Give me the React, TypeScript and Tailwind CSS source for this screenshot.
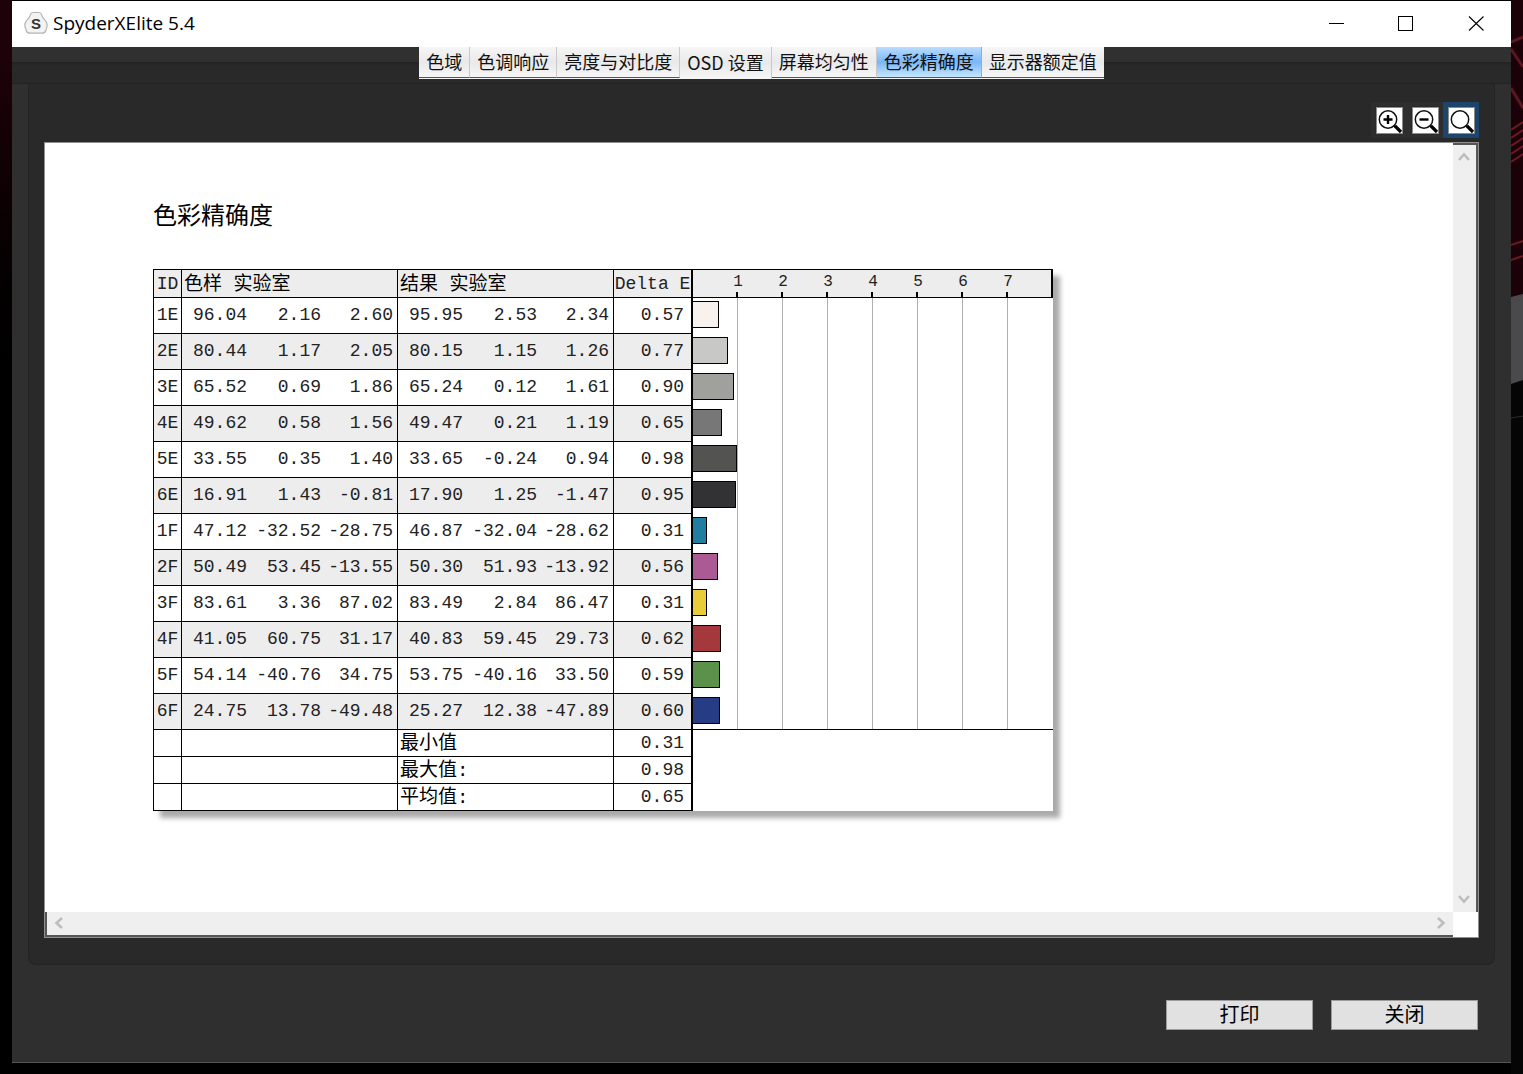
import { clsx } from "clsx"

const tabs = ["色域", "色调响应", "亮度与对比度", "OSD 设置", "屏幕均匀性", "色彩精确度", "显示器额定值"]
const activeTab = "色彩精确度"
const hoveredTab = "OSD 设置"

const patches = [
    { id: "1E", sample: ["96.04", "2.16", "2.60"], result: ["95.95", "2.53", "2.34"], delta: "0.57", color: "#f8f2ee" },
    { id: "2E", sample: ["80.44", "1.17", "2.05"], result: ["80.15", "1.15", "1.26"], delta: "0.77", color: "#c8c8c7" },
    { id: "3E", sample: ["65.52", "0.69", "1.86"], result: ["65.24", "0.12", "1.61"], delta: "0.90", color: "#a0a19d" },
    { id: "4E", sample: ["49.62", "0.58", "1.56"], result: ["49.47", "0.21", "1.19"], delta: "0.65", color: "#787777" },
    { id: "5E", sample: ["33.55", "0.35", "1.40"], result: ["33.65", "-0.24", "0.94"], delta: "0.98", color: "#535352" },
    { id: "6E", sample: ["16.91", "1.43", "-0.81"], result: ["17.90", "1.25", "-1.47"], delta: "0.95", color: "#323234" },
    { id: "1F", sample: ["47.12", "-32.52", "-28.75"], result: ["46.87", "-32.04", "-28.62"], delta: "0.31", color: "#207fa1" },
    { id: "2F", sample: ["50.49", "53.45", "-13.55"], result: ["50.30", "51.93", "-13.92"], delta: "0.56", color: "#ac5a94" },
    { id: "3F", sample: ["83.61", "3.36", "87.02"], result: ["83.49", "2.84", "86.47"], delta: "0.31", color: "#e8cd38" },
    { id: "4F", sample: ["41.05", "60.75", "31.17"], result: ["40.83", "59.45", "29.73"], delta: "0.62", color: "#a4383d" },
    { id: "5F", sample: ["54.14", "-40.76", "34.75"], result: ["53.75", "-40.16", "33.50"], delta: "0.59", color: "#5b914b" },
    { id: "6F", sample: ["24.75", "13.78", "-49.48"], result: ["25.27", "12.38", "-47.89"], delta: "0.60", color: "#263c85" },
]

const summary = [
    { label: "最小值", value: "0.31" },
    { label: "最大值:", value: "0.98" },
    { label: "平均值:", value: "0.65" },
]

const ticks = [1, 2, 3, 4, 5, 6, 7]

function Logo() {
    return (
        <svg viewBox="0 0 24 24" className="size-6" aria-hidden="true">
            <path
                d="M9 1.5h6c1.6 0 2.3.9 2.7 2.3.5 2 1.3 3.2 2.9 4.8 2.3 2.3 3 4 2.5 6.4-.3 1.3-.8 2.6-1.3 4.5-.5 1.9-1.8 2.7-3.8 2.7H6c-2 0-3.3-.8-3.8-2.7-.5-1.9-1-3.2-1.3-4.5C.4 12.6 1.1 10.9 3.4 8.6 5 7 5.8 5.8 6.3 3.8 6.7 2.4 7.4 1.5 9 1.5z"
                fill="#f3f3f3"
                stroke="#b4b4b4"
                strokeWidth="1.2"
            />
            <text x="12" y="17.5" textAnchor="middle" className="fill-[#333] font-['Liberation_Sans',sans-serif] text-[15px] font-bold">
                S
            </text>
        </svg>
    )
}

function TitleBar() {
    return (
        <header className="flex h-[46px] items-center bg-white pb-0.5 pl-3 text-black">
            <Logo />
            <h1 className="ml-[5px] flex-1 font-['Open_Sans','Noto_Sans',sans-serif] text-[19px] leading-6">SpyderXElite 5.4</h1>
            <button type="button" aria-label="最小化" className="flex h-full w-[70px] items-center justify-center">
                <svg viewBox="0 0 16 16" className="size-4" stroke="currentColor" shapeRendering="crispEdges">
                    <path d="M1 8.5h15" />
                </svg>
            </button>
            <button type="button" aria-label="最大化" className="flex h-full w-[70px] items-center justify-center">
                <svg viewBox="0 0 16 16" className="size-4" fill="none" stroke="currentColor" shapeRendering="crispEdges">
                    <path d="M.5 1.5h14v14H.5z" />
                </svg>
            </button>
            <button type="button" aria-label="关闭窗口" className="flex h-full w-[70px] items-center justify-center">
                <svg viewBox="0 0 16 16" className="size-4" fill="none" stroke="currentColor" strokeWidth="1.1">
                    <path d="M1 1.5l14.5 14M15.5 1.5L1 15.5" />
                </svg>
            </button>
        </header>
    )
}

function TabBar() {
    return (
        <nav className="flex h-[37px] items-start justify-center border-b border-[#232323] bg-[linear-gradient(#303030_15px,#232323_15px,#292929_19px)]">
            <div role="tablist" className="flex h-8 rounded-t-sm bg-[#f3f3f3]">
                {tabs.map((tab) => (
                    <button
                        key={tab}
                        type="button"
                        role="tab"
                        aria-selected={tab === activeTab}
                        className={clsx(
                            "flex items-center whitespace-nowrap border-r px-[7px] text-lg leading-6 text-[#111] last:border-r-0",
                            tab === hoveredTab ? "h-8 border-[#bbb] px-[6px] pb-0.5" : "h-[31px] border-b border-b-[#555] pb-[3px]",
                            tab === activeTab
                                ? "border-r-[#7fb0e8] bg-linear-to-b from-[#b9dcff] via-[#79b6f8] to-[#c5e6ff]"
                                : "border-r-[#c9c9c9] bg-linear-to-b from-[#f6f6f6] via-[#e9e9e9] to-[#f6f6f6]"
                        )}
                    >
                        {tab}
                    </button>
                ))}
            </div>
        </nav>
    )
}

function ZoomButton({ label, sign, focused }: { label: string; sign?: string; focused?: boolean }) {
    return (
        <button
            type="button"
            aria-label={label}
            className={clsx("flex size-9 items-end justify-end border-4", focused ? "border-[#1d456b] bg-[#1d456b]" : "border-[#2e2e2e]")}
        >
            <svg viewBox="0 0 27 27" className="size-[27px]" fill="none">
                <rect x=".5" y=".5" width="26" height="26" fill="#fff" stroke="#8b8b8b" />
                <circle cx="12" cy="12.5" r="8.7" stroke="#111" strokeWidth="1.5" />
                <path d="M18 18.5l2 1.5" stroke="#111" strokeWidth="2" />
                <path d="M19 19l6 6" stroke="#000" strokeWidth="3.2" />
                {sign && <path d={sign} stroke="#000" strokeWidth="2.4" />}
            </svg>
        </button>
    )
}

function ScrollArrow({ label, d }: { label: string; d: string }) {
    return (
        <button type="button" aria-label={label} className="flex size-[22px] items-center justify-center">
            <svg viewBox="0 0 12 12" className="size-3" fill="none" stroke="#bdbdbd" strokeWidth="2.6">
                <path d={d} />
            </svg>
        </button>
    )
}

function LabCells({ values }: { values: string[] }) {
    return (
        <>
            {values.map((value, index) => (
                <td key={index} className="border-b border-black pb-0.5 pr-1 text-right nth-[3n+1]:border-r">
                    {value}
                </td>
            ))}
        </>
    )
}

function ResultTable() {
    return (
        <table className="w-[540px] table-fixed border-separate border-spacing-0 border-l border-t border-black">
            <colgroup>
                <col className="w-[28px]" />
                <col className="w-[69px]" />
                <col className="w-[74px]" />
                <col className="w-[73px]" />
                <col className="w-[69px]" />
                <col className="w-[74px]" />
                <col className="w-[73px]" />
                <col className="w-[79px]" />
            </colgroup>
            <thead>
                <tr className="h-7 whitespace-nowrap bg-[#ededed]">
                    <th className="border-b border-r border-black font-normal">ID</th>
                    <th colSpan={3} className="border-b border-r border-black pl-0.5 pt-0.5 text-left text-[19px] font-normal text-black">色样 实验室</th>
                    <th colSpan={3} className="border-b border-r border-black pl-0.5 pt-0.5 text-left text-[19px] font-normal text-black">结果 实验室</th>
                    <th className="border-b border-r-2 border-black font-normal">Delta E</th>
                </tr>
            </thead>
            <tbody>
                {patches.map((patch) => (
                    <tr key={patch.id} className="h-9 even:bg-[#ededed]">
                        <th className="border-b border-r border-black pb-0.5 font-normal">{patch.id}</th>
                        <LabCells values={patch.sample} />
                        <LabCells values={patch.result} />
                        <td className="border-b border-r-2 border-black pb-0.5 pr-[7px] text-right">{patch.delta}</td>
                    </tr>
                ))}
            </tbody>
            <tfoot>
                {summary.map((row) => (
                    <tr key={row.label} className="h-[27px]">
                        <td className="border-b border-r border-black" />
                        <td colSpan={3} className="border-b border-r border-black" />
                        <th colSpan={3} className="border-b border-r border-black pl-0.5 pt-0.5 text-left text-[19px] font-normal text-black">{row.label}</th>
                        <td className="border-b border-r-2 border-black pr-[7px] text-right">{row.value}</td>
                    </tr>
                ))}
            </tfoot>
        </table>
    )
}

function DeltaChart() {
    return (
        <div className="w-[360px]">
            {/* Scale */}
            <div className="grid h-[29px] grid-cols-8 border-b border-t border-black bg-[#ededed]">
                {ticks.map((tick) => (
                    <div key={tick} className="flex flex-col items-end justify-between pt-0.5">
                        <span className="flex w-0 justify-center text-base leading-5">{tick}</span>
                        <span className="h-[5px] w-0.5 bg-black" />
                    </div>
                ))}
                <div className="border-r-2 border-black" />
            </div>

            <div className="grid border-b border-black">
                <div className="col-start-1 row-start-1 grid grid-cols-8">
                    {ticks.map((tick) => (
                        <div key={tick} className="border-r border-[#b0b0b0]" />
                    ))}
                </div>
                <div className="z-10 col-start-1 row-start-1">
                    {patches.map((patch) => (
                        <div key={patch.id} className="h-9 pt-[3px] last:h-[35px]">
                            <div
                                className="h-[27px] border-y border-r border-black"
                                style={{ width: `${(Number(patch.delta) / 8) * 100}%`, backgroundColor: patch.color }}
                            />
                        </div>
                    ))}
                </div>
            </div>
        </div>
    )
}

function Viewer() {
    return (
        <div className="grid flex-1 grid-cols-[minmax(0,1fr)_25px] grid-rows-[minmax(0,1fr)_25px] border border-[#8f8f8f] bg-white">
            <main className="pl-[108px] pt-[53px] text-black">
                <h2 className="text-2xl leading-9">色彩精确度</h2>
                <div className="mt-[37px] flex w-fit bg-white font-['Liberation_Mono','Noto_Sans_CJK_SC',monospace] text-lg leading-5 text-[#222] shadow-[7px_7px_5px_#aaa]">
                    <ResultTable />
                    <DeltaChart />
                </div>
            </main>
            <div className="flex flex-col items-start justify-between border-r-2 border-t-2 border-[#555] bg-[#efefef] pb-0.5 pt-px">
                <ScrollArrow label="向上滚动" d="M1 9l5-5.5L11 9" />
                <ScrollArrow label="向下滚动" d="M1 3l5 5.5L11 3" />
            </div>
            <div className="flex items-start justify-between border-b-2 border-l-2 border-[#555] bg-[#efefef] px-px">
                <ScrollArrow label="向左滚动" d="M9 1L3.5 6L9 11" />
                <ScrollArrow label="向右滚动" d="M3 1l5.5 5L3 11" />
            </div>
        </div>
    )
}

function WallpaperRight() {
    return (
        <svg viewBox="0 0 12 1074" preserveAspectRatio="none" className="h-full w-3" aria-hidden="true">
            <rect width="12" height="1074" fill="#050506" />
            <rect width="12" height="297" fill="#1b0208" />
            <path d="M0 42l12-5M0 49l12 18M0 88l12 20" stroke="#5c1522" strokeWidth="3" />
            <path d="M0 130l12-8M0 138l12-8M0 146l12-8M0 154l12-8M0 162l12-8M0 245l12-4M0 260l12-4" stroke="#6e1824" strokeWidth="2" />
            <path d="M0 297l12-3v86l-12 4z" fill="#4a4a4c" />
            <path d="M0 418l12-2" stroke="#2b2b2b" />
        </svg>
    )
}

export default function App() {
    return (
        <div className="flex h-screen min-h-[900px] bg-black font-['Noto_Sans_CJK_SC',sans-serif]">
            <div className="w-3 bg-linear-to-b from-[#1e020a] from-5% to-black to-45%" />

            <div className="mb-[11px] mt-px flex min-w-0 flex-1 flex-col border-b border-[#555] bg-[#2f2f2f]">
                <TitleBar />
                <TabBar />
                <section className="mx-4 flex flex-1 flex-col rounded-b-lg border border-t-0 border-[#242424] bg-[#292929] px-[15px] pb-[26px] pt-[18px]">
                    <div className="mb-1 flex justify-end">
                        <ZoomButton label="放大" sign="M12 8v9M7.5 12.5h9" />
                        <ZoomButton label="缩小" sign="M7.5 12.5h9" />
                        <ZoomButton label="适合窗口" focused />
                    </div>
                    <Viewer />
                </section>
                <footer className="flex justify-end gap-[18px] pb-8 pr-[33px] pt-[35px]">
                    <button type="button" className="h-[30px] w-[147px] border border-[#9c9c9c] bg-[#e1e1e1] pb-0.5 text-xl leading-6 text-black">
                        打印
                    </button>
                    <button type="button" className="h-[30px] w-[147px] border border-[#9c9c9c] bg-[#e1e1e1] pb-0.5 text-xl leading-6 text-black">
                        关闭
                    </button>
                </footer>
            </div>

            <WallpaperRight />
        </div>
    )
}
